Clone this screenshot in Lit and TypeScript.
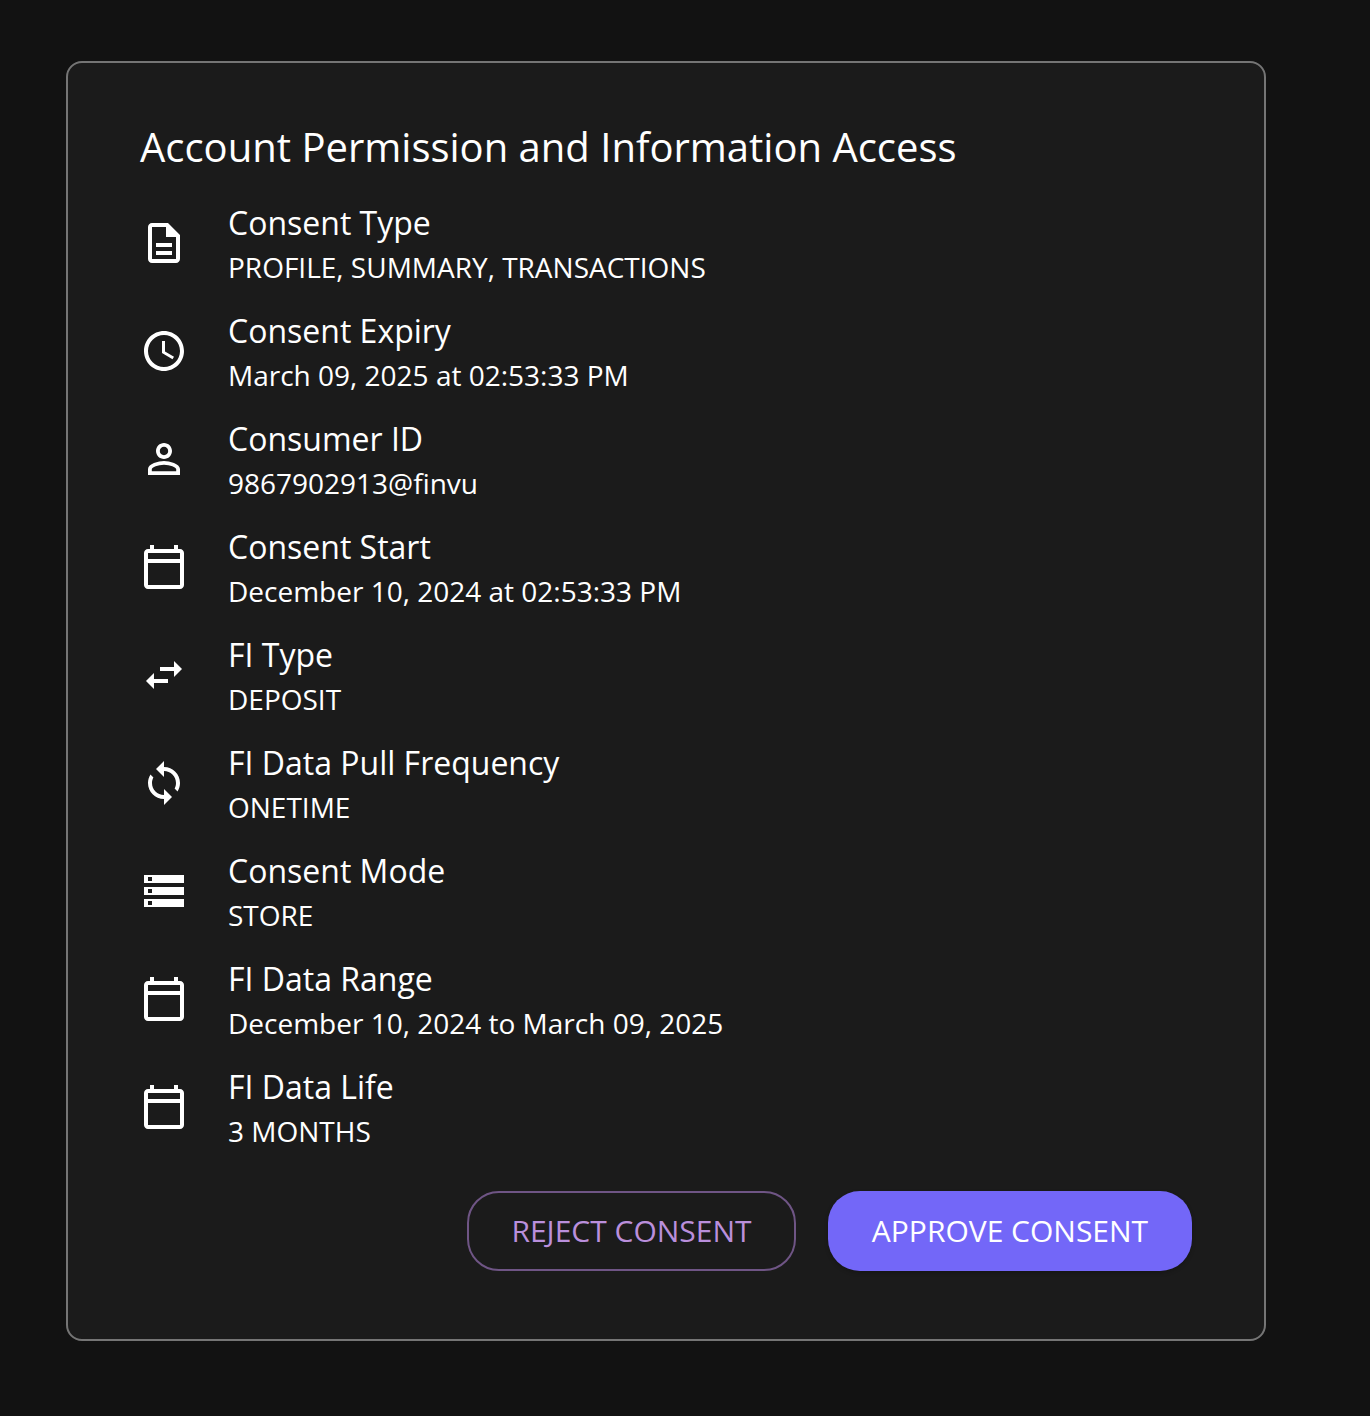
import { LitElement, html, css, svg } from "lit";
import { customElement } from "lit/decorators.js";

const CAL = "M20 3h-1V1h-2v2H7V1H5v2H4c-1.1 0-2 .9-2 2v16c0 1.1.9 2 2 2h16c1.1 0 2-.9 2-2V5c0-1.1-.9-2-2-2zm0 2v3H4V5h16zM4 21V10h16v11H4z";
const ROWS = [
  { icon: "M8 16h8v2H8zm0-4h8v2H8zm6-10H6c-1.1 0-2 .9-2 2v16c0 1.1.89 2 1.99 2H18c1.1 0 2-.9 2-2V8l-6-6zm4 18H6V4h7v5h5v11z", label: "Consent Type", value: "PROFILE, SUMMARY, TRANSACTIONS" },
  { icon: "M11.99 2C6.47 2 2 6.48 2 12s4.47 10 9.99 10C17.52 22 22 17.52 22 12S17.52 2 11.99 2zM12 20c-4.42 0-8-3.58-8-8s3.58-8 8-8 8 3.58 8 8-3.58 8-8 8zM12.5 7H11v6l5.25 3.15.75-1.23-4.5-2.67z", label: "Consent Expiry", value: "March 09, 2025 at 02:53:33 PM" },
  { icon: "M12 5.9c1.16 0 2.1.94 2.1 2.1s-.94 2.1-2.1 2.1S9.9 9.16 9.9 8s.94-2.1 2.1-2.1m0 9c2.97 0 6.1 1.46 6.1 2.1v1.1H5.9V17c0-.64 3.13-2.1 6.1-2.1M12 4C9.79 4 8 5.79 8 8s1.79 4 4 4 4-1.79 4-4-1.79-4-4-4zm0 9c-2.67 0-8 1.34-8 4v3h16v-3c0-2.66-5.33-4-8-4z", label: "Consumer ID", value: "9867902913@finvu" },
  { icon: CAL, label: "Consent Start", value: "December 10, 2024 at 02:53:33 PM" },
  { icon: "M6.99 11L3 15l3.99 4v-3H14v-2H6.99v-3zM21 9l-4-4v3h-7v2h7v3l4-4z", label: "FI Type", value: "DEPOSIT" },
  { icon: "M12 4V1L8 5l4 4V6c3.31 0 6 2.69 6 6 0 1.01-.25 1.97-.7 2.8l1.46 1.46C19.54 15.03 20 13.57 20 12c0-4.42-3.58-8-8-8zm0 14c-3.31 0-6-2.69-6-6 0-1.01.25-1.97.7-2.8L5.24 7.74C4.46 8.97 4 10.43 4 12c0 4.42 3.58 8 8 8v3l4-4-4-4v3z", label: "FI Data Pull Frequency", value: "ONETIME" },
  { icon: "M2 20h20v-4H2v4zm2-3h2v2H4v-2zM2 4v4h20V4H2zm4 3H4V5h2v2zm-4 7h20v-4H2v4zm2-3h2v2H4v-2z", label: "Consent Mode", value: "STORE" },
  { icon: CAL, label: "FI Data Range", value: "December 10, 2024 to March 09, 2025" },
  { icon: CAL, label: "FI Data Life", value: "3 MONTHS" },
];

@customElement("app-root")
export class AppRoot extends LitElement {
  static styles = css`
    :host { display: block; min-height: 1416px; background: #121212; font-family: "Open Sans", "Noto Sans", sans-serif; color: #fff; box-sizing: border-box; padding: 61px 104px 75px 66px; }
    .card { box-sizing: border-box; width: 1200px; height: 1280px; background: #1b1b1b; border: 2px solid #757575; border-radius: 16px; padding: 54px 72px 0 72px; }
    h1 { margin: 0; font-size: 40px; font-weight: 400; line-height: 60px; }
    .list { margin-top: 12px; display: flex; flex-direction: column; }
    .row { height: 108px; display: flex; align-items: center; }
    svg { width: 48px; height: 48px; fill: #fff; flex: none; margin-right: 40px; display: block; }
    .text { display: flex; flex-direction: column; padding-top: 4px; }
    .label { font-size: 32px; line-height: 44px; }
    .value { font-size: 28px; line-height: 44px; }
    .actions { display: flex; justify-content: flex-end; gap: 32px; margin-top: 30px; }
    .btn { box-sizing: border-box; height: 80px; border-radius: 32px; font: 400 30px "Open Sans", sans-serif; display: flex; align-items: center; justify-content: center; padding: 0 0 2px; }
    .reject { width: 329px; background: transparent; border: 2px solid #6f5585; color: #ba8fdc; }
    .approve { width: 364px; background: #7367f8; border: 0; color: #fff; box-shadow: 0 2px 4px rgba(0,0,0,.2); }
  `;
  render() {
    return html`<div class="card">
      <h1>Account Permission and Information Access</h1>
      <div class="list">
        ${ROWS.map(r => html`<div class="row">
          <svg viewBox="0 0 24 24">${svg`<path d=${r.icon}></path>`}</svg>
          <div class="text"><span class="label">${r.label}</span><span class="value">${r.value}</span></div>
        </div>`)}
      </div>
      <div class="actions">
        <button class="btn reject">REJECT CONSENT</button>
        <button class="btn approve">APPROVE CONSENT</button>
      </div>
    </div>`;
  }
}
